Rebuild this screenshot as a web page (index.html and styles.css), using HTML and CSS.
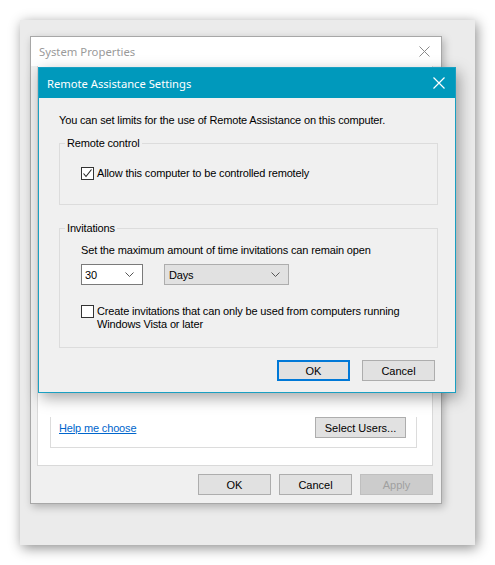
FILE: index.html
```html
<!DOCTYPE html>
<html>
<head>
<meta charset="utf-8">
<title>Remote Assistance Settings</title>
<link rel="stylesheet" href="styles.css">
</head>
<body>

<div class="desk">

  <div class="win sysprops">
    <div class="win__title">
      <span class="win__caption">System Properties</span>
      <svg class="win__close" width="11" height="11" viewBox="0 0 11 11"><path d="M0.5 0.5L10.5 10.5M10.5 0.5L0.5 10.5" stroke="#8a8a8a" stroke-width="1"/></svg>
    </div>
    <div class="win__body">
      <div class="tabpage">
        <div class="tabpage__group">
          <div class="tabpage__row">
            <a href="#help" class="link">Help me choose</a>
            <span class="btn btn--users">Select Users...</span>
          </div>
        </div>
      </div>
      <div class="win__buttons">
        <span class="btn">OK</span>
        <span class="btn">Cancel</span>
        <span class="btn btn--disabled">Apply</span>
      </div>
    </div>
  </div>

  <div class="win dialog">
    <div class="dialog__title">
      <span class="dialog__caption">Remote Assistance Settings</span>
      <svg class="dialog__close" width="12" height="12" viewBox="0 0 12 12"><path d="M0.5 0.5L11.5 11.5M11.5 0.5L0.5 11.5" stroke="#fff" stroke-width="1.2"/></svg>
    </div>
    <div class="dialog__body">
      <p class="dialog__intro">You can set limits for the use of Remote Assistance on this computer.</p>

      <fieldset class="group group--remote">
        <legend class="group__legend">Remote control</legend>
        <label class="check">
          <span class="check__box">
            <svg width="11" height="11" viewBox="0 0 11 11"><path d="M1.5 5.5L4 8.5L9.5 1.5" fill="none" stroke="#222" stroke-width="1.1"/></svg>
          </span>
          <span class="check__text">Allow this computer to be controlled remotely</span>
        </label>
      </fieldset>

      <fieldset class="group group--invite">
        <legend class="group__legend">Invitations</legend>
        <p class="group__p">Set the maximum amount of time invitations can remain open</p>
        <div class="selects">
          <span class="select select--num">
            <span>30</span>
            <svg width="9" height="5" viewBox="0 0 9 5"><path d="M0.5 0.5L4.5 4.5L8.5 0.5" fill="none" stroke="#555" stroke-width="1"/></svg>
          </span>
          <span class="select select--unit">
            <span>Days</span>
            <svg width="9" height="5" viewBox="0 0 9 5"><path d="M0.5 0.5L4.5 4.5L8.5 0.5" fill="none" stroke="#555" stroke-width="1"/></svg>
          </span>
        </div>
        <label class="check check--multi">
          <span class="check__box"></span>
          <span class="check__text">Create invitations that can only be used from computers running<br>Windows Vista or later</span>
        </label>
      </fieldset>

      <div class="dialog__buttons">
        <span class="btn btn--default">OK</span>
        <span class="btn">Cancel</span>
      </div>
    </div>
  </div>

</div>

</body>
</html>
```

FILE: styles.css
```css
/* reset */
html,body{margin:0;padding:0;}
p,fieldset,legend{margin:0;padding:0;}
body{background:#fff;font-family:"Liberation Sans",Arial,sans-serif;font-size:11px;letter-spacing:-.15px;color:#000;inline-size:495px;block-size:565px;overflow:hidden;}

/* desktop area: windows sit on a free canvas */
.desk{position:absolute;left:20px;top:20px;width:455px;height:525px;background:#ebebeb;box-shadow:2px 3px 12px rgba(0,0,0,.45);}
.win{position:absolute;box-sizing:border-box;}

/* system properties (inactive, behind) */
.sysprops{left:10px;top:16px;width:412px;height:468px;background:#f0f0f0;border:1px solid #a7a7a7;box-shadow:2px 3px 8px rgba(0,0,0,.25);}
.win__title{height:29px;background:#fff;display:flex;align-items:center;justify-content:space-between;padding:0 10px 0 8px;}
.win__caption{font-family:"Noto Sans",sans-serif;font-size:11.3px;letter-spacing:0;color:#9a9a9a;}
.win__close{margin-right:1px;}
.win__body{display:flex;flex-direction:column;padding:0 8px 0 6px;height:437px;box-sizing:border-box;}
.tabpage{flex:1;background:#fff;border:1px solid #d9d9d9;border-top:0;padding:0 15px 17px 12px;display:flex;flex-direction:column;justify-content:flex-end;}
.tabpage__group{border:1px solid #dcdcdc;border-top:0;padding:0 10px 9px 8px;}
.tabpage__row{display:flex;align-items:center;justify-content:space-between;}
.link{color:#0066cc;text-decoration:underline;font-size:11px;margin-top:1px;}
.win__buttons{display:flex;justify-content:flex-end;gap:8px;padding:8px 0 8px;}

/* buttons */
.btn{box-sizing:border-box;display:flex;align-items:center;justify-content:center;width:73px;height:21px;background:#e1e1e1;border:1px solid #adadad;font-size:11px;letter-spacing:0;color:#000;}
.btn--users{width:91px;}
.btn--disabled{background:#cccccc;border-color:#bfbfbf;color:#a0a0a0;}
.btn--default{border:2px solid #0078d7;}

/* remote assistance dialog */
.dialog{left:18px;top:47px;width:418px;height:326px;background:#f0f0f0;border:1px solid #1aa0c2;box-shadow:3px 5px 14px rgba(0,0,0,.35);display:flex;flex-direction:column;}
.dialog__title{height:30px;background:#0099bc;display:flex;align-items:center;justify-content:space-between;padding:0 10px 0 8px;flex:none;}
.dialog__caption{font-family:"Noto Sans",sans-serif;font-size:11.2px;letter-spacing:0;color:#fff;}
.dialog__body{padding:15px 17px 0 20px;}
.dialog__intro{line-height:14px;}

.group{border:1px solid #dcdcdc;padding:0 0 0 21px;margin:9px 0 0;min-width:0;}
.group__legend{padding:0 2px;margin-left:-16px;line-height:14px;}
.group--remote{height:69px;box-sizing:border-box;padding-top:17px;}
.group--invite{height:127px;box-sizing:border-box;margin-top:16px;padding-top:8px;}
.group__p{line-height:14px;}

.check{display:flex;align-items:flex-start;gap:3px;}
.check__box{box-sizing:border-box;width:13px;height:13px;border:1px solid #333;background:#fff;display:flex;align-items:center;justify-content:center;flex:none;}
.check__text{line-height:13px;}
.check--multi{margin-top:20px;}

.selects{display:flex;gap:21px;margin-top:7px;}
.select{box-sizing:border-box;height:21px;display:flex;align-items:center;justify-content:space-between;padding:0 8px 0 3px;}
.select--num{width:62px;background:#fff;border:1px solid #7a7a7a;}
.select--unit{width:125px;background:#e1e1e1;border:1px solid #adadad;padding-left:4px;}

.dialog__buttons{display:flex;justify-content:flex-end;gap:12px;margin-top:12px;padding-right:3px;}
```
